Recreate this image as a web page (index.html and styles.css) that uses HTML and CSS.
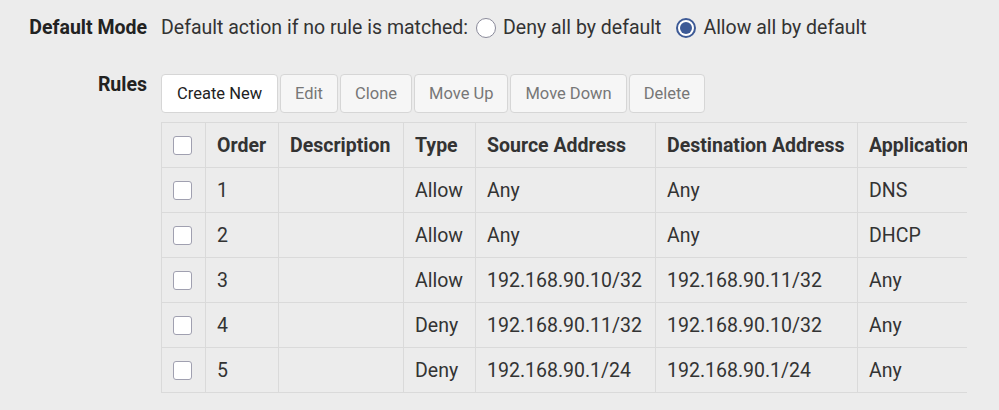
FILE: index.html
```html
<!DOCTYPE html>
<html>
<head>
<meta charset="utf-8">
<link rel="stylesheet" href="styles.css">
</head>
<body>
<div class="form">
  <div class="label mode-label">Default Mode</div>
  <div class="mode-field">
    <span class="mode-text">Default action if no rule is matched:</span>
    <label class="radio-opt"><span class="radio"></span>Deny all by default</label>
    <label class="radio-opt"><span class="radio checked"></span>Allow all by default</label>
  </div>
  <div class="label rules-label">Rules</div>
  <div class="rules-field">
    <div class="toolbar">
      <button class="btn primary">Create New</button>
      <button class="btn">Edit</button>
      <button class="btn">Clone</button>
      <button class="btn">Move Up</button>
      <button class="btn">Move Down</button>
      <button class="btn">Delete</button>
    </div>
    <div class="table-wrap">
      <table class="rules">
        <colgroup>
          <col class="w-check">
          <col class="w-order">
          <col class="w-desc">
          <col class="w-type">
          <col class="w-src">
          <col class="w-dst">
          <col class="w-app">
        </colgroup>
        <thead>
          <tr>
            <th><span class="cbox"></span></th>
            <th>Order</th>
            <th>Description</th>
            <th>Type</th>
            <th>Source Address</th>
            <th>Destination Address</th>
            <th>Application</th>
          </tr>
        </thead>
        <tbody>
          <tr><td><span class="cbox"></span></td><td>1</td><td></td><td>Allow</td><td>Any</td><td>Any</td><td>DNS</td></tr>
          <tr><td><span class="cbox"></span></td><td>2</td><td></td><td>Allow</td><td>Any</td><td>Any</td><td>DHCP</td></tr>
          <tr><td><span class="cbox"></span></td><td>3</td><td></td><td>Allow</td><td>192.168.90.10/32</td><td>192.168.90.11/32</td><td>Any</td></tr>
          <tr><td><span class="cbox"></span></td><td>4</td><td></td><td>Deny</td><td>192.168.90.11/32</td><td>192.168.90.10/32</td><td>Any</td></tr>
          <tr><td><span class="cbox"></span></td><td>5</td><td></td><td>Deny</td><td>192.168.90.1/24</td><td>192.168.90.1/24</td><td>Any</td></tr>
        </tbody>
      </table>
    </div>
  </div>
</div>
</body>
</html>
```

FILE: styles.css
```css
html, body {
  margin: 0;
  padding: 0;
  background: #ececec;
}
body {
  font-family: Roboto, "Liberation Sans", sans-serif;
  font-size: 19.5px;
  color: #333;
}
.form {
  display: grid;
  grid-template-columns: 147px 1fr;
  column-gap: 14px;
  padding-top: 14px;
}
.label {
  font-weight: bold;
  text-align: right;
  color: #222;
}
.mode-label {
  line-height: 27px;
}
.mode-field {
  display: flex;
  align-items: center;
  height: 27px;
  gap: 8px;
}
.radio-opt {
  display: flex;
  align-items: center;
  gap: 7px;
  margin-right: 7px;
}
.radio {
  width: 18px;
  height: 18px;
  border: 1px solid #8a8a9a;
  border-radius: 50%;
  background: #fff;
  box-sizing: content-box;
  position: relative;
}
.radio.checked {
  border: 2px solid #3d5a96;
  width: 16px;
  height: 16px;
}
.radio.checked::after {
  content: "";
  position: absolute;
  left: 2px;
  top: 2px;
  width: 12px;
  height: 12px;
  border-radius: 50%;
  background: #3d5a96;
}
.rules-label {
  margin-top: 33px;
  line-height: 22px;
}
.rules-field {
  margin-top: 33px;
}
.toolbar {
  display: flex;
  gap: 2px;
}
.btn {
  font-family: inherit;
  font-size: 16.5px;
  height: 39px;
  margin: 0;
  padding: 0 14px;
  border: 1px solid #d6d6d6;
  border-radius: 4px;
  background: #f6f6f6;
  color: #777;
}
.btn.primary {
  background: #fff;
  color: #222;
  padding: 0 15px;
}
.table-wrap {
  margin-top: 9px;
  width: 806px;
  overflow: hidden;
}
.rules {
  border-collapse: collapse;
  table-layout: fixed;
  width: 946px;
  white-space: nowrap;
}
.w-check { width: 44px; }
.w-order { width: 73px; }
.w-desc { width: 125px; }
.w-type { width: 72px; }
.w-src { width: 180px; }
.w-dst { width: 202px; }
.w-app { width: 250px; }
.rules th, .rules td {
  border: 1px solid #dadada;
  height: 44px;
  padding: 0 11px;
  text-align: left;
  font-size: 19.5px;
  overflow: hidden;
}
.rules th {
  font-weight: bold;
  color: #333;
}
.rules td {
  color: #333;
}
.cbox {
  display: block;
  width: 17px;
  height: 17px;
  border: 1px solid #a0a0b0;
  border-radius: 3px;
  background: #fff;
}
```
